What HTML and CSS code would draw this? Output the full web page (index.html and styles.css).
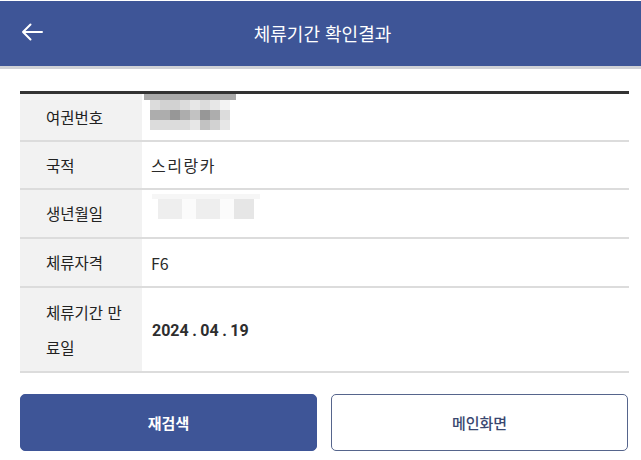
FILE: index.html
```html
<!DOCTYPE html>
<html lang="ko">
<head>
<meta charset="utf-8">
<title>체류기간 확인결과</title>
<link rel="stylesheet" href="styles.css">
</head>
<body>
<header class="appbar">
  <button class="back" aria-label="뒤로">
    <svg width="24" height="18" viewBox="0 0 24 18"><path d="M22 9H3M10.5 1.5L3 9l7.5 7.5" fill="none" stroke="#fff" stroke-width="2" stroke-linecap="round" stroke-linejoin="round"/></svg>
  </button>
  <h1 class="title">체류기간 확인결과</h1>
</header>
<main class="content">
  <div class="table">
    <div class="row">
      <div class="label">여권번호</div>
      <div class="value">
        <div class="mosaic passport">
          <div class="bar"></div>
          <div class="cells">
            <i class="c1"></i><i class="c2"></i><i class="c2"></i><i class="c1"></i><i class="c0"></i><i class="c1"></i><i class="c0"></i><i class="cw"></i>
            <i class="c4"></i><i class="c4"></i><i class="c5"></i><i class="c4"></i><i class="c3"></i><i class="c5"></i><i class="c4"></i><i class="c1"></i>
            <i class="c1"></i><i class="c1"></i><i class="c1"></i><i class="c1"></i><i class="c0"></i><i class="c3"></i><i class="c2"></i><i class="c0"></i>
          </div>
        </div>
      </div>
    </div>
    <div class="row">
      <div class="label">국적</div>
      <div class="value spaced">스리랑카</div>
    </div>
    <div class="row r49">
      <div class="label">생년월일</div>
      <div class="value">
        <div class="mosaic birth">
          <div class="faint"></div>
          <div class="blocks">
            <i class="b1"></i><i class="b0"></i><i class="b1"></i><i class="b0"></i><i class="b2"></i>
          </div>
        </div>
      </div>
    </div>
    <div class="row r49">
      <div class="label">체류자격</div>
      <div class="value">F6</div>
    </div>
    <div class="row tall">
      <div class="label">체류기간 만료일</div>
      <div class="value date">2024<span class="dot">.</span>04<span class="dot">.</span>19</div>
    </div>
  </div>
  <div class="actions">
    <button class="btn primary">재검색</button>
    <button class="btn outline">메인화면</button>
  </div>
</main>
</body>
</html>
```

FILE: styles.css
```css
* { box-sizing: border-box; }
html, body {
  margin: 0;
  padding: 0;
  background: #fff;
  font-family: "Noto Sans CJK KR", "Noto Sans", Roboto, sans-serif;
  color: #333;
}
.appbar {
  height: 68px;
  margin-top: 1px;
  background: #3e5597;
  border-bottom: 3px solid #cfd1d6;
  display: flex;
  align-items: center;
  justify-content: center;
  position: relative;
}
.back {
  position: absolute;
  left: 20px;
  top: 22px;
  padding: 0;
  border: 0;
  background: none;
  display: flex;
}
.title {
  margin: 0 0 2px 4px;
  font-size: 18px;
  font-weight: 400;
  color: #fff;
}
.content {
  padding: 22px 12px 0 20px;
}
.table {
  border-top: 3px solid #333;
}
.row {
  display: flex;
  border-bottom: 2px solid #dcdcdc;
  height: 48px;
}
.row.r49 { height: 49px; }
.row.tall { height: 85px; }
.label {
  width: 122px;
  flex: none;
  background: #f2f2f2;
  padding: 0 16px 0 26px;
  display: flex;
  align-items: center;
  font-size: 15.5px;
  line-height: 35px;
  word-break: break-all;
  color: #222;
}
.value {
  flex: 1;
  display: flex;
  align-items: center;
  padding-left: 9px;
  font-size: 16px;
  color: #2a2a2a;
}
.value.spaced { letter-spacing: 1.5px; }
.value.date {
  font-family: Roboto, "Noto Sans CJK KR", sans-serif;
  font-weight: 700;
  font-size: 16px;
  color: #2e2e2e;
  padding-top: 2px;
  padding-left: 10px;
}
.dot { margin: 0 3.5px; }
.mosaic.passport {
  align-self: flex-start;
  margin-left: -7px;
}
.passport .bar {
  width: 92px;
  height: 6px;
  background: #aaa;
}
.passport .cells {
  margin-left: 6px;
  display: grid;
  grid-template-columns: repeat(8, 10px);
  grid-auto-rows: 10px;
}
.cells i { display: block; }
.c0 { background: #e7e7e7; }
.c1 { background: #dcdcdc; }
.c2 { background: #d2d2d2; }
.c3 { background: #c2c2c2; }
.c4 { background: #adadad; }
.c5 { background: #979797; }
.cw { background: #f3f3f3; }
.mosaic.birth {
  align-self: flex-start;
  margin-top: 4px;
  margin-left: 1px;
}
.birth .faint {
  width: 108px;
  height: 5px;
  background: #f6f6f6;
}
.birth .blocks {
  display: flex;
  margin-left: 6px;
  height: 20px;
}
.blocks i { display: block; height: 20px; }
.b0 { width: 14px; background: #fbfbfb; }
.b1 { width: 24px; background: #eeeeee; }
.b2 { width: 20px; background: #e6e6e6; }
.actions {
  display: flex;
  gap: 14px;
  padding-top: 21px;
  padding-right: 1px;
}
.btn {
  flex: 1;
  height: 57px;
  border-radius: 5px;
  font-family: "Noto Sans CJK KR", sans-serif;
  font-size: 15px;
  font-weight: 700;
  cursor: pointer;
}
.btn.primary {
  background: #3e5597;
  border: 1px solid #3e5597;
  color: #fff;
}
.btn.outline {
  background: #fff;
  border: 1.5px solid #56658c;
  color: #3a4770;
  font-weight: 500;
}
```
